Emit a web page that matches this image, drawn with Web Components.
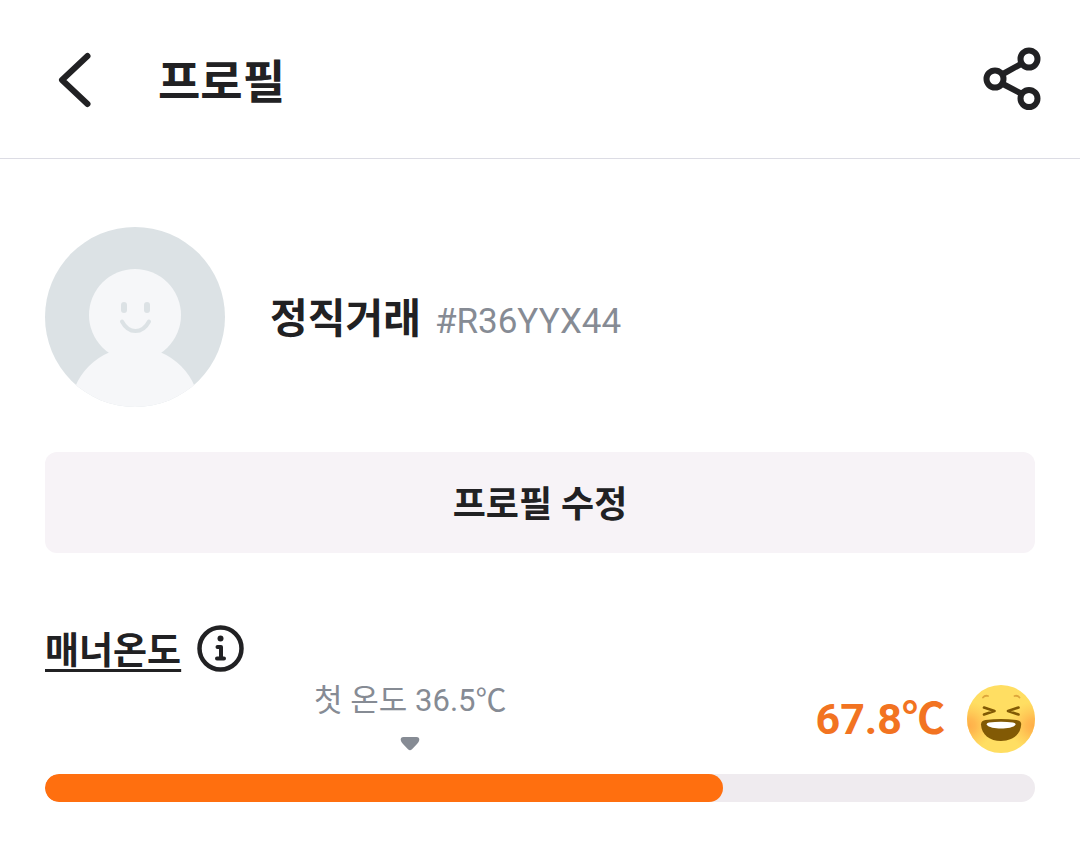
<!DOCTYPE html>
<html lang="ko">
<head>
<meta charset="utf-8">
<meta name="viewport" content="width=device-width, initial-scale=1">
<title>프로필</title>
<style>
  body {
    margin: 0;
    background: #fff;
    color: #212123;
    font-family: Roboto, "Noto Sans CJK KR", sans-serif;
  }
</style>
</head>
<body>
<profile-page></profile-page>

<template id="profile-page">
  <style>
    :host { display: block; }
    main { padding: 68px 45px 51px; display: flex; flex-direction: column; }
    edit-button { margin-top: 45px; }
    manner-temperature { margin-top: 72px; }
  </style>
  <app-bar>프로필</app-bar>
  <main>
    <user-summary><span slot="name">정직거래</span><span slot="code">#R36YYX44</span></user-summary>
    <edit-button>프로필 수정</edit-button>
    <manner-temperature></manner-temperature>
  </main>
</template>

<template id="app-bar">
  <style>
    :host { display: block; border-bottom: 1px solid #dcdce4; }
    header { display: flex; align-items: center; height: 158px; padding: 0 36px 0 48px; }
    button { display: flex; padding: 0; border: 0; background: none; color: inherit; }
    h1 { flex: 1; margin: 0 0 0 56px; padding-top: 6px; font-size: 46px; line-height: 60px; font-weight: 700; }
    svg { display: block; fill: none; stroke: currentColor; stroke-width: 6; }
  </style>
  <header>
    <button type="button" aria-label="뒤로">
      <svg width="54" height="60" viewBox="0 0 54 60" stroke-linecap="round" stroke-linejoin="round"><path d="M39.500 7 14 31 39.500 55"/></svg>
    </button>
    <h1><slot></slot></h1>
    <button type="button" aria-label="공유">
      <svg width="64" height="64" viewBox="0 0 64 64"><circle cx="49" cy="12" r="8.5"/><circle cx="15" cy="32" r="8.5"/><circle cx="49" cy="51.500" r="8.5"/><path d="M22 27.500 41 17M22 36.500 41 46.500"/></svg>
    </button>
  </header>
</template>

<template id="user-summary">
  <style>
    :host { display: flex; align-items: center; gap: 45px; }
    svg { display: block; flex: none; }
    p { margin: 0; padding-top: 6px; display: flex; align-items: baseline; gap: 14px; line-height: 60px; }
    .name { font-size: 41px; font-weight: 700; }
    .code { font-size: 35px; color: #868b94; }
  </style>
  <svg width="180" height="180" viewBox="0 0 180 180" role="img" aria-label="프로필 사진">
    <defs><clipPath id="c"><circle cx="90" cy="90" r="90"/></clipPath></defs>
    <g clip-path="url(#c)">
      <rect width="180" height="180" fill="#dce2e5"/>
      <circle cx="90" cy="88" r="46" fill="#f6f7f9"/>
      <circle cx="90" cy="185" r="65" fill="#f6f7f9"/>
      <rect x="76" y="75" width="6" height="11" rx="3" fill="#dce2e5"/>
      <rect x="99" y="75" width="6" height="11" rx="3" fill="#dce2e5"/>
      <path d="M77 94.500Q82 104 90.500 104T104 94.500" fill="none" stroke="#dce2e5" stroke-width="4" stroke-linecap="round"/>
    </g>
  </svg>
  <p><span class="name"><slot name="name"></slot></span><span class="code"><slot name="code"></slot></span></p>
</template>

<template id="edit-button">
  <style>
    :host { display: block; }
    button {
      display: block; width: 100%; padding: 27px 24px 21px; border: 0; border-radius: 12px;
      background: #f7f3f7; color: inherit; font: 700 36px/53px Roboto, "Noto Sans CJK KR", sans-serif;
    }
  </style>
  <button type="button"><slot></slot></button>
</template>

<template id="manner-temperature">
  <style>
    :host { display: block; }
    .title { display: flex; align-items: center; gap: 16px; height: 47px; }
    a {
      padding-top: 6px; color: inherit; font-size: 37px; line-height: 48px; font-weight: 700;
      text-decoration: underline; text-decoration-thickness: 3px; text-underline-offset: 5px;
      text-decoration-skip-ink: none;
    }
    .title button { display: flex; padding: 0; border: 0; background: none; color: inherit; }
    svg { display: block; }
    .values { display: flex; align-items: flex-end; margin-top: 9px; }
    .first { width: 73.8%; padding-bottom: 2px; display: flex; flex-direction: column; align-items: center; gap: 15px; color: #868b94; font-size: 31px; line-height: 40px; }
    .now { flex: 1; display: flex; align-items: center; justify-content: flex-end; gap: 22px; color: #f27321; font-size: 43px; line-height: 68px; font-weight: 700; white-space: nowrap; }
    .bar { margin-top: 21px; height: 28px; border-radius: 14px; background: #efebef; overflow: hidden; }
    .fill { width: 68.5%; height: 100%; border-radius: 14px; background: #ff6f0f; }
  </style>
  <div class="title">
    <a href="#manner">매너온도</a>
    <button type="button" aria-label="매너온도 안내">
      <svg width="47" height="47" viewBox="0 0 47 47"><circle cx="23.500" cy="23.500" r="21" fill="none" stroke="currentColor" stroke-width="4.500"/><circle cx="23.500" cy="13.500" r="3" fill="currentColor"/><path d="M20.500 22H24V33M20 33.500H27" fill="none" stroke="currentColor" stroke-width="4" stroke-linecap="round" stroke-linejoin="round"/></svg>
    </button>
  </div>
  <div class="values">
    <div class="first"><span>첫 온도 36.5℃</span>
      <svg width="20" height="15" viewBox="0 0 20 15"><path d="M3.500 1H16.500Q19.500 1 19.300 4Q19 6 17 8L12 13.300Q10 15 8 13.300L3 8Q1 6 .7 4Q.5 1 3.500 1Z" fill="#868b94"/></svg>
    </div>
    <div class="now"><span>67.8℃</span>
      <svg width="68" height="68" viewBox="0 0 68 68" role="img" aria-label="활짝 웃는 얼굴">
        <defs>
          <radialGradient id="l" cx=".02" cy=".6" r=".36"><stop offset="0" stop-color="#ffae48"/><stop offset=".3" stop-color="#ffb04a" stop-opacity=".8"/><stop offset="1" stop-color="#ffc04e" stop-opacity="0"/></radialGradient>
          <radialGradient id="r" cx=".98" cy=".6" r=".36"><stop offset="0" stop-color="#ffae48"/><stop offset=".3" stop-color="#ffb04a" stop-opacity=".8"/><stop offset="1" stop-color="#ffc04e" stop-opacity="0"/></radialGradient>
        </defs>
        <circle cx="34" cy="34" r="34" fill="#ffde62"/>
        <circle cx="34" cy="34" r="34" fill="url(#l)"/>
        <circle cx="34" cy="34" r="34" fill="url(#r)"/>
        <g fill="none" stroke-linecap="round" stroke-linejoin="round">
          <path d="M16 12.500Q18 10 21 11M47.500 11Q50.500 10 52.500 12.500" stroke="#dda63c" stroke-width="1.800"/>
          <path d="M17 22.500 27.500 26 17 29.500M51.500 22.500 41 26 51.500 29.500" stroke="#825a05" stroke-width="2.600"/>
        </g>
        <path d="M14 39.500C14 36.500 16 35.500 18.500 35Q34 33 49.500 35C52 35.500 54.300 36.500 54.200 39.500C53.500 50 45 56 34 56C23 56 14.500 50 14 39.500Z" fill="#825a05"/>
        <path d="M19.500 39.500Q19.500 38 22 37.600Q34 36 46 37.600Q48.800 38 48.700 39.500C47 42.500 40 43.500 34 43.500C28 43.500 21.500 42.500 19.500 39.500Z" fill="#fff"/>
      </svg>
    </div>
  </div>
  <div class="bar" role="progressbar" aria-label="매너온도" aria-valuemin="0" aria-valuemax="99" aria-valuenow="67.8"><div class="fill"></div></div>
</template>

<script>
  class TemplateElement extends HTMLElement {
    constructor() {
      super();
      const template = document.getElementById(this.localName);
      this.attachShadow({ mode: "open" }).append(template.content.cloneNode(true));
    }
  }
  customElements.define("app-bar", class AppBar extends TemplateElement {});
  customElements.define("user-summary", class UserSummary extends TemplateElement {});
  customElements.define("edit-button", class EditButton extends TemplateElement {});
  customElements.define("manner-temperature", class MannerTemperature extends TemplateElement {});
  customElements.define("profile-page", class ProfilePage extends TemplateElement {});
</script>
</body>
</html>
